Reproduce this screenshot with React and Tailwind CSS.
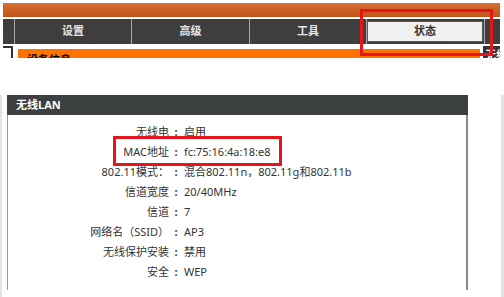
const tabs = ["设置", "高级", "工具"];

const rows = [
  ["无线电", "启用"],
  ["MAC地址", "fc:75:16:4a:18:e8"],
  ["802.11模式：", "混合802.11n，802.11g和802.11b"],
  ["信道宽度", "20/40MHz"],
  ["信道", "7"],
  ["网络名（SSID）", "AP3"],
  ["无线保护安装", "禁用"],
  ["安全", "WEP"],
];

export default function App() {
  return (
    <div className="relative w-[504px] h-[297px] overflow-hidden bg-white font-['Noto_Sans','Noto_Sans_CJK_SC',sans-serif]">
      {/* clipped top of the router page */}
      <div className="h-[58px] overflow-hidden pl-[3px] pr-[4px]">
        <div className="mt-[3px] h-[14px] bg-gradient-to-b from-[#d8702f] to-[#c0531b]" />
        <div className="mt-[2px] flex h-[25px] bg-[#3e3e3e]">
          <div className="w-[11px]" />
          {tabs.map((t, i) => (
            <div
              key={t}
              className={`${i === 1 ? "w-[118px]" : "w-[117px]"} flex items-center justify-center border-l border-[#a8a8a8] text-[11px] font-bold text-[#e6e6e6]`}
            >
              {t}
            </div>
          ))}
          <div className="flex w-[118px] border-l border-[#a8a8a8]">
            <div className="my-[2px] mr-[1px] flex flex-1 items-center justify-center border border-[#5a5a5a] bg-[#f0f0f0] text-[11px] font-bold text-[#333]">
              状态
            </div>
          </div>
          <div className="w-[16px] border-l border-[#a8a8a8]" />
        </div>
        <div className="mt-[2px] flex">
          <div className="h-[12px] w-[10px] border-t-2 border-r-2 border-[#333]" />
          <div className="ml-[5px] mt-[3px] h-[9px] w-[462px] overflow-hidden bg-[#ff7200] pl-[9px]">
            <div className="mt-[5px] text-[11px] font-bold leading-[11px] text-black">设备信息</div>
          </div>
          <div className="ml-[3px] h-[12px] w-[17px] overflow-hidden whitespace-nowrap bg-[#333] pl-[2px]">
            <div className="mt-[3px] text-[11px] font-bold leading-[11px] text-white">无线信息</div>
          </div>
        </div>
      </div>

      {/* wireless LAN panel */}
      <div className="h-[238px] border-l-2 border-r-[3px] border-b-2 border-[#e3e3e3]">
        <div className="ml-[5px] mt-[37px] w-[461px]">
          <div className="flex h-[20px] items-center bg-[#3d4041] pl-[9px] text-[11px] font-bold text-white">
            无线LAN
          </div>
          <div className="relative h-[175px] border-l border-r-2 border-l-[#9a9a9a] border-r-[#8a8a8a] pt-[7px]">
            {rows.map(([k, v]) => (
              <div key={k} className="grid h-[20px] grid-cols-[161px_14px_1fr] items-center text-[11px] text-[#333]">
                <span className="text-right">{k}</span>
                <span className="text-center font-bold">:</span>
                <span className="pl-[1px]">{v}</span>
              </div>
            ))}
            <div className="absolute left-[105px] top-[21px] h-[30px] w-[169px] border-[3px] border-[#e8141c]" />
          </div>
        </div>
      </div>

      <div className="absolute left-[360px] top-[9px] h-[47px] w-[133px] border-[3px] border-[#e8141c]" />
    </div>
  );
}
